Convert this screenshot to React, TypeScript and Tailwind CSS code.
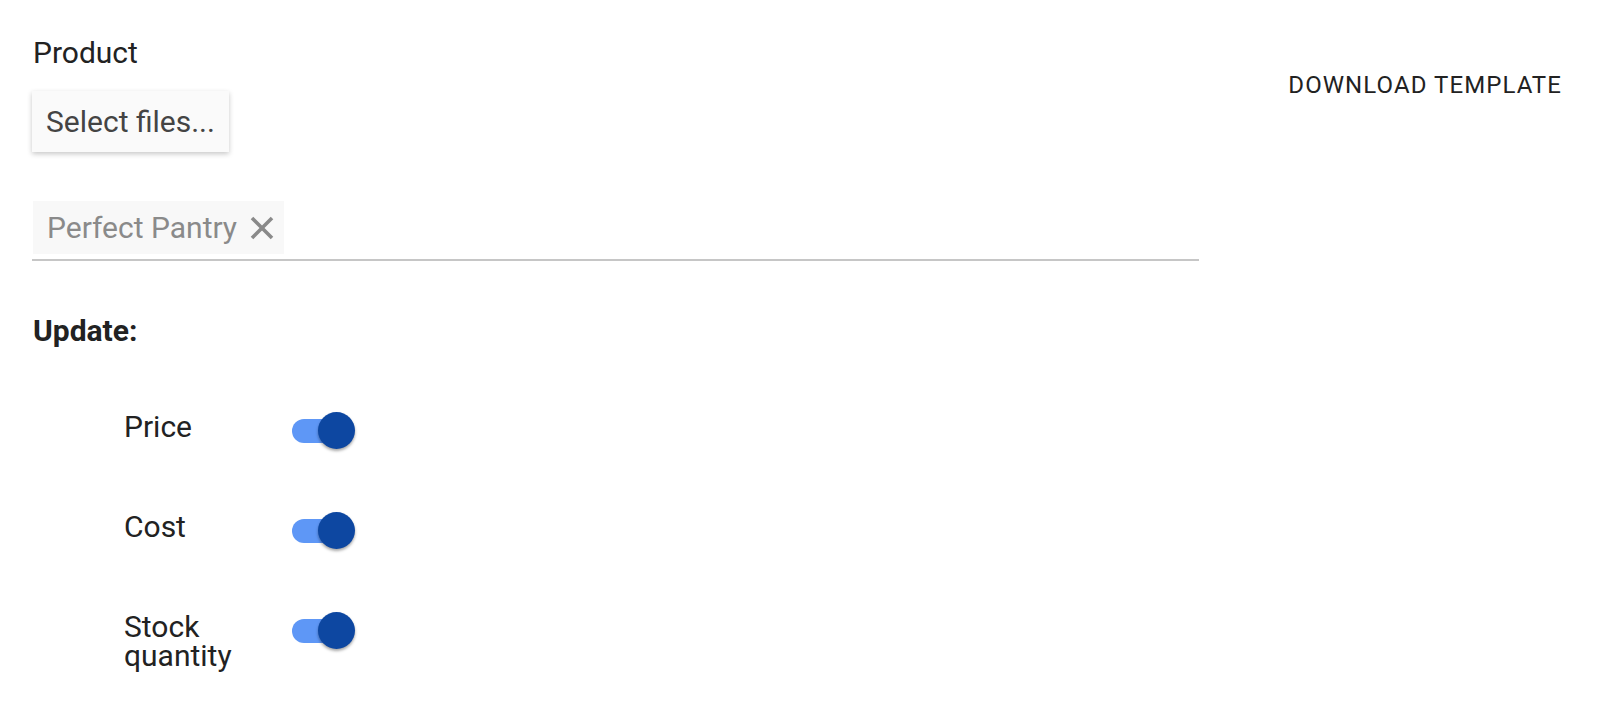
import { useState } from 'react';

const UPDATE_FIELDS = [
  { key: 'price', label: 'Price' },
  { key: 'cost', label: 'Cost' },
  { key: 'stock', label: 'Stock quantity' },
];

function Toggle({ on, onChange }: { on: boolean; onChange: () => void }) {
  return (
    <button onClick={onChange} className="relative h-[37px] w-[63px] shrink-0">
      <span
        className={`absolute top-[7px] left-0 h-[24px] w-[61px] rounded-full ${
          on ? 'bg-[#5e97f6]' : 'bg-[#bdbdbd]'
        }`}
      />
      <span
        className={`absolute top-0 h-[37px] w-[37px] rounded-full shadow-[0_2px_3px_rgba(0,0,0,0.35)] ${
          on ? 'right-0 bg-[#0d47a1]' : 'left-0 bg-[#fafafa]'
        }`}
      />
    </button>
  );
}

export default function App() {
  const [toggles, setToggles] = useState<Record<string, boolean>>({
    price: true,
    cost: true,
    stock: true,
  });

  return (
    <div className="flex min-h-screen bg-white font-['Roboto',sans-serif] text-[#222]">
      {/* ── Left column ─────────────────────────────────────────────── */}
      <div className="flex w-[1199px] shrink-0 flex-col pt-[35px] pl-[33px]">
        <div className="text-[30px] leading-[35px]">Product</div>

        <button className="mt-[21px] ml-[-1px] flex h-[61px] w-fit items-center bg-[#fafafa] px-[14px] text-[30px] leading-[35px] text-[#444] shadow-[0_2px_5px_rgba(0,0,0,0.22)]">
          Select files...
        </button>

        {/* chip input */}
        <div className="mt-[49px] ml-[-1px] border-b-2 border-[#c6c6c6] pb-[5px]">
          <div className="ml-[1px] flex h-[53px] w-fit items-center bg-[#f8f8f8] pr-[10px] pl-[14px]">
            <span className="text-[30px] leading-[35px] text-[#8a8a8a]">Perfect Pantry</span>
            <svg width="24" height="24" viewBox="0 0 24 24" className="ml-[13px]">
              <path d="M2 2 L22 22 M22 2 L2 22" stroke="#8a8a8a" strokeWidth="3.6" />
            </svg>
          </div>
        </div>

        <div className="mt-[52px] text-[30px] leading-[35px] font-bold">Update:</div>

        <div className="mt-[64px] flex flex-col pl-[91px]">
          {UPDATE_FIELDS.map(({ key, label }) => (
            <div key={key} className="flex h-[100px] items-start">
              <span className="w-[168px] shrink-0 text-[30px] leading-[29px]">{label}</span>
              <Toggle
                on={toggles[key]}
                onChange={() => setToggles((t) => ({ ...t, [key]: !t[key] }))}
              />
            </div>
          ))}
        </div>
      </div>

      {/* ── Right column ────────────────────────────────────────────── */}
      <div className="flex flex-1 justify-end pt-[71px] pr-[61px]">
        <button className="h-fit text-[24px] leading-[28px] tracking-[0.045em] text-[#222]">
          DOWNLOAD TEMPLATE
        </button>
      </div>
    </div>
  );
}
